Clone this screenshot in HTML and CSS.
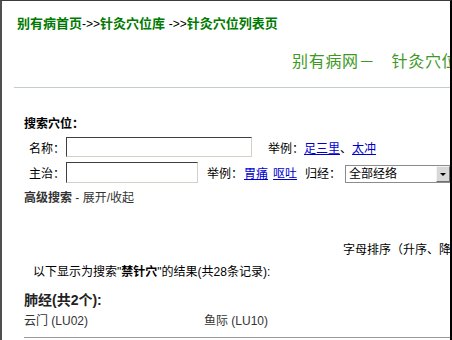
FILE: index.html
```html
<!DOCTYPE html>
<html lang="zh-CN">
<head>
  <meta charset="UTF-8">
  <title>针灸穴位列表页</title>
  <link rel="stylesheet" href="styles.css">
</head>
<body>
  <div class="frame">
    <div class="page">
      <div class="crumb">
        <a href="#">别有病首页</a><span class="arrow">-&gt;&gt;</span><a href="#">针灸穴位库</a> <span class="arrow">-&gt;&gt;</span><a href="#">针灸穴位列表页</a>
      </div>

      <h1 class="site-title">别有病网－<span class="title-sub">针灸穴位列表页</span></h1>
      <div class="rule"></div>

      <form class="search">
        <div class="search-title">搜索穴位：</div>

        <div class="search-row row-name">
          <label for="name">名称：</label>
          <input type="text" id="name" class="input-name">
          <span class="hint">举例：<a href="#">足三里</a>、<a href="#">太冲</a></span>
        </div>

        <div class="search-row row-treat">
          <label for="treat">主治：</label>
          <input type="text" id="treat" class="input-treat">
          <span class="hint">举例：<a href="#" class="ex1">胃痛</a><a href="#" class="ex2">呕吐</a></span>
          <label for="meridian" class="meridian-label">归经：</label>
          <div class="select-wrap">
            <select id="meridian">
              <option>全部经络</option>
              <option>手太阴肺经</option>
            </select>
            <span class="select-btn"><span class="tri"></span></span>
          </div>
        </div>

        <div class="advanced"><b>高级搜索</b> - 展开/收起</div>
      </form>

      <div class="sort">字母排序（升序、降序）</div>

      <div class="summary">以下显示为搜索"<b>禁针穴</b>"的结果(共28条记录):</div>

      <h2 class="group-title">肺经(共2个):</h2>
      <div class="points">
        <a href="#">云门 (LU02)</a>
        <a href="#">鱼际 (LU10)</a>
      </div>
    </div>
  </div>
</body>
</html>
```

FILE: styles.css
```css
html, body {
  margin: 0;
  padding: 0;
  background: #fff;
}

body {
  font-family: "Liberation Sans", "Noto Sans CJK SC", sans-serif;
  font-size: 12px;
  color: #000;
  overflow: hidden;
}

.frame {
  height: 340px;
  box-sizing: border-box;
  border-top: 1px solid #3c3c3c;
  border-left: 2px solid #505050;
  border-right: 2px solid #000;
  overflow: hidden;
}

.page {
  width: 640px;
}

a {
  color: #0000cc;
}

/* breadcrumb */
.crumb {
  padding: 15px 0 0 15px;
  height: 16px;
  line-height: 16px;
  font-size: 13px;
  font-weight: bold;
  white-space: nowrap;
}

.crumb a {
  color: #007a00;
  text-decoration: none;
}

.crumb .arrow {
  font-weight: normal;
  color: #000;
  font-size: 12px;
}

.site-title {
  margin: 20px 0 0;
  padding-left: 290px;
  font-size: 16px;
  font-weight: normal;
  line-height: 20px;
  letter-spacing: 0.7px;
  color: #3d9a1f;
  white-space: nowrap;
}

.title-sub {
  margin-left: 16px;
}

.rule {
  margin: 15px 0 0 12px;
  border-top: 1px solid #c3ccd0;
}

/* search form */
.search {
  margin: 28px 0 0;
  padding-left: 22px;
}

.search-title {
  height: 16px;
  line-height: 16px;
  font-weight: bold;
}

.search-row {
  display: flex;
  align-items: center;
  white-space: nowrap;
}

.search-row label {
  width: 37px;
  padding-left: 5px;
}

.row-name {
  margin-top: 5px;
  height: 20px;
}

.row-treat {
  margin-top: 5px;
  height: 21px;
}

.search-row input {
  box-sizing: border-box;
  margin: 0;
  padding: 1px 3px;
  border: 1px solid;
  border-color: #3f3f3f #d4d0c8 #d4d0c8 #3f3f3f;
  font: inherit;
  background: #fff;
}

.input-name {
  width: 186px;
  height: 20px;
}

.input-treat {
  width: 132px;
  height: 21px;
}

.row-name .hint {
  margin-left: 16px;
}

.row-treat .hint {
  margin-left: 9px;
}

.ex1 {
  margin-left: 1px;
}

.ex2 {
  margin-left: 5px;
}

.search-row .meridian-label {
  width: auto;
  padding-left: 0;
  margin-left: 8px;
}

.select-wrap {
  position: relative;
  margin-left: 4px;
  margin-top: 3px;
}

.select-wrap select {
  appearance: none;
  -webkit-appearance: none;
  box-sizing: border-box;
  width: 106px;
  height: 18px;
  margin: 0;
  padding: 0 0 0 3px;
  border: 1px solid #8c8c8c;
  border-radius: 0;
  background: #fff;
  font: inherit;
  line-height: 16px;
  color: #000;
}

.select-btn {
  position: absolute;
  top: 1px;
  right: 1px;
  width: 14px;
  height: 16px;
  box-sizing: border-box;
  background: #d8d8d8;
  border: 1px solid;
  border-color: #f4f4f4 #707070 #707070 #f4f4f4;
  display: flex;
  align-items: center;
  justify-content: center;
}

.tri {
  width: 0;
  height: 0;
  border-left: 3px solid transparent;
  border-right: 3px solid transparent;
  border-top: 3px solid #000;
}

.advanced {
  margin-top: 7px;
  height: 16px;
  line-height: 16px;
  color: #333;
}

/* results */
.sort {
  margin-top: 36px;
  padding-left: 341px;
  height: 16px;
  line-height: 16px;
  white-space: nowrap;
}

.summary {
  margin-top: 6px;
  padding-left: 31px;
  height: 16px;
  line-height: 16px;
  white-space: nowrap;
}

.group-title {
  margin: 11px 0 0;
  padding-left: 22px;
  font-size: 14px;
  line-height: 18px;
  color: #222;
}

.points {
  display: grid;
  grid-template-columns: 180px 180px;
  margin: 4px 0 0 22px;
  height: 24px;
  line-height: 16px;
  border-bottom: 1px solid #9a9a9a;
}

.points a {
  color: #333;
  text-decoration: none;
}
```
